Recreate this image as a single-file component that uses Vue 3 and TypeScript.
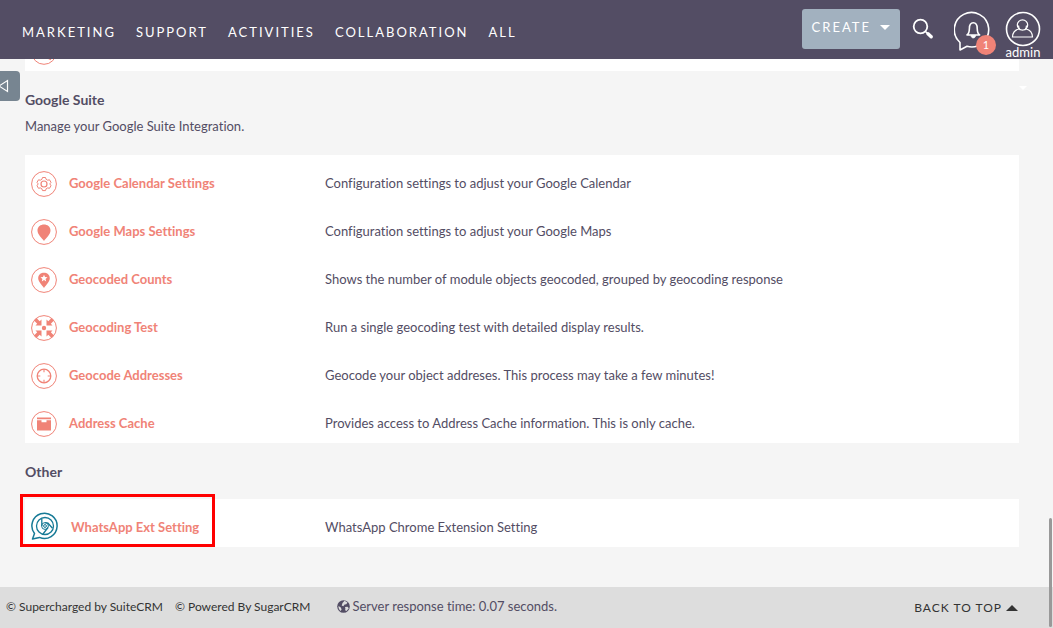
<script setup lang="ts">
interface Setting {
  icon: string
  title: string
  description: string
}

const modules: string[] = ['Marketing', 'Support', 'Activities', 'Collaboration', 'All']

const googleSettings: Setting[] = [
  { icon: 'gear', title: 'Google Calendar Settings', description: 'Configuration settings to adjust your Google Calendar' },
  { icon: 'pin', title: 'Google Maps Settings', description: 'Configuration settings to adjust your Google Maps' },
  { icon: 'star', title: 'Geocoded Counts', description: 'Shows the number of module objects geocoded, grouped by geocoding response' },
  { icon: 'arrows', title: 'Geocoding Test', description: 'Run a single geocoding test with detailed display results.' },
  { icon: 'target', title: 'Geocode Addresses', description: 'Geocode your object addreses. This process may take a few minutes!' },
  { icon: 'box', title: 'Address Cache', description: 'Provides access to Address Cache information. This is only cache.' },
]
</script>

<template>
  <div class="page">
    <header class="topbar">
      <nav class="modules">
        <a v-for="m in modules" :key="m" href="#">{{ m }}</a>
      </nav>
      <div class="tools">
        <button type="button" class="create">
          Create
          <svg width="10" height="5" viewBox="0 0 10 5"><path d="M0 0h10L5 5z" fill="#fff" /></svg>
        </button>
        <button type="button" class="icon-button search" aria-label="Search">
          <svg width="22" height="22" viewBox="0 0 22 22" fill="none" stroke="#fff">
            <circle cx="8.5" cy="8.5" r="6.8" stroke-width="1.8" />
            <path d="M13.5 13.5l2 2" stroke-width="1.6" />
            <path d="M16 15.8l3.2 3" stroke-width="3.4" stroke-linecap="round" />
          </svg>
        </button>
        <button type="button" class="icon-button alerts" aria-label="Notifications">
          <svg width="38" height="42" viewBox="0 0 38 42" fill="none" stroke="#fff" stroke-width="1.6" stroke-linejoin="round">
            <path d="M6 31.500A17.200 17.200 0 1 1 13 35.300L6 39z" />
            <path d="M13 24c2-1.500 2.300-3 2.400-6.500 0-3.700 1.300-5.700 3.900-5.700s3.900 2 3.900 5.700c.1 3.500.4 5 2.400 6.500z" />
            <path d="M17 24.500h4.600c0 3.200-4.600 3.200-4.600 0z" fill="#fff" stroke-width=".8" />
          </svg>
          <span class="badge">1</span>
        </button>
        <button type="button" class="icon-button user">
          <svg width="36" height="36" viewBox="0 0 36 36" fill="none" stroke="#fff">
            <circle cx="18" cy="18" r="16.5" stroke-width="1.6" />
            <circle cx="17.500" cy="14" r="5.2" stroke-width="1.2" />
            <path d="M13.500 14.500c0 2 .6 3.400 1.800 4.600M21.500 14.500c0 2-.6 3.400-1.800 4.600M14 18c-4 .8-6.300 3.200-6.500 8h20c-.2-4.800-2.500-7.200-6.500-8" stroke-width="1.2" />
          </svg>
          <span>admin</span>
          <svg class="user-caret" width="8" height="4" viewBox="0 0 8 4"><path d="M0 0h8L4 4z" fill="#fff" /></svg>
        </button>
      </div>
    </header>

    <button type="button" class="drawer" aria-label="Toggle sidebar">
      <svg width="9" height="14" viewBox="0 0 9 14"><path d="M7.500 1.500v11L-1 7z" fill="none" stroke="#fff" stroke-width="1.2" /></svg>
    </button>

    <main>
      <div class="panel previous">
        <svg width="26" height="26" viewBox="0 0 26 26" fill="none" stroke="#f08377">
          <circle cx="13" cy="13" r="12.3" />
          <path d="M17 19l3 1.500" stroke-width="1.5" />
        </svg>
      </div>

      <section>
        <h2>Google Suite</h2>
        <p class="intro">Manage your Google Suite Integration.</p>
        <table class="panel google">
          <tbody>
            <tr v-for="s in googleSettings" :key="s.title">
              <th scope="row">
                <a href="#" class="setting">
                  <svg width="26" height="26" viewBox="0 0 26 26" fill="none" stroke="#f08377">
                    <circle cx="13" cy="13" r="12.4" stroke-width="1" />
                    <template v-if="s.icon === 'gear'">
                      <path d="M11.500 6.500h3l.6 1.800 1.600.9 1.800-.4 1.500 2.600-1.200 1.500 1.200 1.800-1.500 2.600-1.800-.4-1.600.9-.6 1.800h-3l-.6-1.800-1.600-.9-1.800.4L6 14.700l1.200-1.800L6 11.400l1.500-2.600 1.800.4 1.600-.9z" stroke-linejoin="round" />
                      <circle cx="13" cy="13" r="3" stroke-width="1.200" />
                    </template>
                    <path v-else-if="s.icon === 'pin'" d="M13 22C11 19 6.500 15.500 6.500 11.500 6.500 3.500 19.500 3.500 19.500 11.500 19.500 15.500 15 19 13 22z" fill="#f08377" stroke="none" />
                    <template v-else-if="s.icon === 'star'">
                      <path d="M13 21C11 18 7.200 14.800 7.200 11.300 7.200 4 18.800 4 18.800 11.300 18.800 14.800 15 18 13 21z" fill="#f08377" stroke="none" />
                      <path d="M13 7.700l1 2.300 2.500.2-1.900 1.700.6 2.500-2.200-1.300-2.200 1.300.6-2.500-1.900-1.700 2.500-.2z" fill="#fff" stroke="none" />
                    </template>
                    <g v-else-if="s.icon === 'arrows'" fill="#f08377" stroke="none">
                      <circle cx="13" cy="13" r="2.2" />
                      <path v-for="angle in [0, 90, 180, 270]" :key="angle" d="M3 5.500L5.500 3l3.200 3.200 1.800-1.700v6H4.500l1.700-1.800z" :transform="`rotate(${angle} 13 13)`" />
                    </g>
                    <template v-else-if="s.icon === 'target'">
                      <circle cx="13" cy="13" r="6.800" stroke-width="1.3" />
                      <path d="M13 6v3.300M13 16.700v3.300M6 13h3.300M16.700 13h3.300" stroke-width="1.1" />
                    </template>
                    <path v-else d="M6 6.500h14v1.800H6zM6 9.300h4.500v2h5v-2H20v10.200H6z" fill="#f08377" stroke="none" />
                  </svg>
                  {{ s.title }}
                </a>
              </th>
              <td>{{ s.description }}</td>
            </tr>
          </tbody>
        </table>
      </section>

      <section>
        <h2>Other</h2>
        <table class="panel other">
          <tbody>
            <tr>
              <th scope="row">
                <a href="#" class="setting">
                  <svg width="28" height="28" viewBox="0 0 28 28" fill="none" stroke="#167a96" stroke-width="1.5">
                    <path d="M3.500 21.500A12.600 12.600 0 1 1 8.500 25.400L1.500 27z" stroke-linejoin="round" />
                    <circle cx="14" cy="14" r="8.500" stroke-width="1.3" />
                    <circle cx="14" cy="14" r="3.400" stroke-width="1" />
                    <circle cx="14" cy="14" r="1.400" stroke-width="1" />
                    <path d="M10.800 6.500v7.500M14 10.600l3 .6 4.500 5M17 15.500L12 22" stroke-width="1.3" />
                  </svg>
                  WhatsApp Ext Setting
                </a>
              </th>
              <td>WhatsApp Chrome Extension Setting</td>
            </tr>
          </tbody>
        </table>
      </section>
    </main>

    <footer>
      <div class="credits">
        <a href="#">© Supercharged by SuiteCRM</a>
        <a href="#">© Powered By SugarCRM</a>
      </div>
      <div class="response">
        <svg width="13" height="13" viewBox="0 0 13 13">
          <circle cx="6.500" cy="6.500" r="6.300" fill="#534d64" />
          <path d="M7.500.8l3 1.700-1.200 1.800-1.700.2-1.300 1.800-1.600-.8L5.500 3zM8 7l2.500-.2 1.300 1.400L9.500 11l-1.400-.8L8.400 8.700zM1.500 6l2.300 1.500.8 2-1 1.500C2.200 9.800 1.300 8 1.500 6z" fill="#ddd" />
        </svg>
        Server response time: 0.07 seconds.
      </div>
      <a class="back" href="#">
        Back to top
        <svg width="12" height="6" viewBox="0 0 12 6"><path d="M0 6h12L6 0z" fill="#333" /></svg>
      </a>
    </footer>
    <div class="scroll-thumb"></div>
  </div>
</template>

<style>
body {
  margin: 0;
  background: #f5f5f5;
}
</style>

<style scoped>
.page {
  position: relative;
  display: flex;
  flex-direction: column;
  min-height: 100vh;
  overflow: hidden;
  background: #f5f5f5;
  color: #534d64;
  font: 13px/20px Lato, sans-serif;
  font-variant-ligatures: none;
}

a {
  color: inherit;
  text-decoration: none;
}

button {
  border: 0;
  padding: 0;
  color: #fff;
  font: inherit;
}

svg {
  display: block;
  flex: none;
}

.topbar {
  position: relative;
  z-index: 1;
  display: flex;
  justify-content: space-between;
  height: 59px;
  padding: 0 12px 0 22px;
  background: #534d64;
  color: #fff;
}

.modules {
  display: flex;
  gap: 20px;
  padding-top: 22px;
  letter-spacing: 2px;
  text-transform: uppercase;
}

.tools {
  display: flex;
  align-items: flex-start;
}

.create {
  display: flex;
  align-items: center;
  gap: 9px;
  height: 40px;
  margin-top: 9px;
  padding: 0 10px 4px;
  border-radius: 3px;
  background: #a2b1bf;
  letter-spacing: 2px;
  text-transform: uppercase;
}

.icon-button {
  position: relative;
  background: none;
}

.search {
  margin: 18px 0 0 12px;
}

.alerts {
  margin: 11px 0 0 20px;
}

.badge {
  position: absolute;
  top: 24px;
  right: -4px;
  width: 20px;
  border-radius: 50%;
  background: #f08377;
  font-size: 11px;
}

.user {
  display: flex;
  flex-direction: column;
  align-items: center;
  margin: 11px 0 0 13px;
  line-height: 10px;
}

.user-caret {
  position: absolute;
  top: 75px;
}

.drawer {
  position: absolute;
  top: 71px;
  left: 0;
  width: 20px;
  height: 30px;
  border-radius: 0 4px 4px 0;
  background: #778591;
}

main {
  flex: 1;
  padding: 0 34px 40px 25px;
}

.panel {
  width: 100%;
  border-collapse: collapse;
  background: #fff;
}

.previous {
  display: flex;
  align-items: flex-end;
  box-sizing: border-box;
  height: 12px;
  padding: 0 6px 6px;
}

h2 {
  margin: 0;
  font-size: 14px;
  line-height: 20px;
}

section {
  padding-top: 19px;
}

.intro {
  margin: 6px 0 19px;
}

th,
td {
  height: 48px;
  padding: 0;
  font-weight: 400;
  text-align: left;
}

th {
  width: 300px;
}

td {
  padding-top: 8px;
  height: 40px;
}

.setting {
  display: flex;
  align-items: flex-start;
  gap: 12px;
  padding: 10px 6px 0;
  color: #f08377;
  font-weight: 700;
  line-height: 24px;
}

.other {
  margin-top: 17px;
}

.other .setting {
  padding-top: 8px;
  line-height: 30px;
}

.other tbody {
  position: relative;
}

.other tbody::after {
  content: "";
  position: absolute;
  top: -5px;
  left: -5px;
  width: 189px;
  height: 47px;
  border: 3px solid #f00;
}

footer {
  display: flex;
  align-items: center;
  height: 41px;
  padding: 0 35px 0 6px;
  background: #ddd;
}

.credits {
  display: flex;
  gap: 12px;
  padding-bottom: 2px;
  color: #333;
  font-size: 12px;
}

.response {
  display: flex;
  align-items: center;
  gap: 2px;
  margin: 0 auto 3px 27px;
}

.back {
  display: flex;
  align-items: center;
  gap: 4px;
  color: #333;
  font-size: 12px;
  letter-spacing: 1px;
  text-transform: uppercase;
}

.scroll-thumb {
  position: absolute;
  right: 1px;
  bottom: 1px;
  width: 3px;
  height: 109px;
  border-radius: 2px;
  background: #999;
}
</style>
